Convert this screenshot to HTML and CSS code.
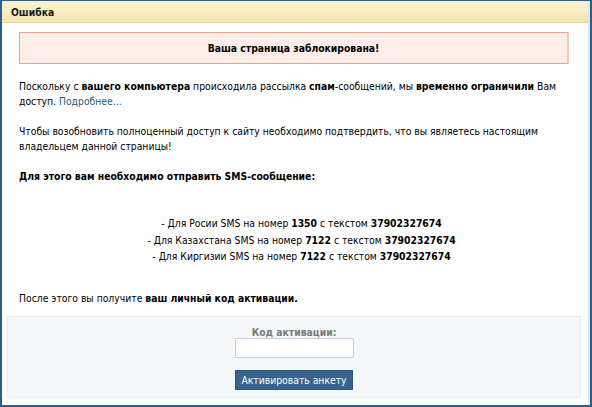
FILE: index.html
```html
<!DOCTYPE html>
<html lang="ru">
<head>
<meta charset="utf-8">
<title>Ошибка</title>
<link rel="stylesheet" href="styles.css">
</head>
<body>
<div class="window">
  <div class="frame">
    <div class="header">Ошибка</div>
    <div class="content">
      <div class="alert">Ваша страница заблокирована!</div>
      <p class="para">Поскольку с <b>вашего компьютера</b> происходила рассылка <b>спам</b>-сообщений, мы <b>временно ограничили</b> Вам доступ. <a class="link" href="#">Подробнее...</a></p>
      <p class="para">Чтобы возобновить полноценный доступ к сайту необходимо подтвердить, что вы являетесь настоящим владельцем данной страницы!</p>
      <p class="para heading"><b>Для этого вам необходимо отправить SMS-сообщение:</b></p>
      <ul class="list">
        <li>- Для Росии SMS на номер <b>1350</b> с текстом <b>37902327674</b></li>
        <li>- Для Казахстана SMS на номер <b>7122</b> с текстом <b>37902327674</b></li>
        <li>- Для Киргизии SMS на номер <b>7122</b> с текстом <b>37902327674</b></li>
      </ul>
      <p class="para after">После этого вы получите <b>ваш личный код активации.</b></p>
    </div>
    <div class="activation">
      <div class="label">Код активации:</div>
      <input class="code" type="text">
      <button class="btn" type="button">Активировать анкету</button>
    </div>
  </div>
</div>
</body>
</html>
```
FILE: styles.css
```css
html, body {
  margin: 0;
  padding: 0;
  background: #ffffff;
}
.window {
  width: 592px;
  height: 407px;
  box-sizing: border-box;
  border: 2px solid #2d5d8b;
  border-top-width: 1px;
  background: #ffffff;
  font-family: "DejaVu Sans Condensed", "DejaVu Sans", sans-serif;
  font-size: 10.3px;
  color: #000000;
}
.frame {
  height: 100%;
  box-sizing: border-box;
  border-right: 2px solid #dfe5ee;
  display: flex;
  flex-direction: column;
}
.header {
  height: 20px;
  line-height: 20px;
  padding-left: 9px;
  font-weight: bold;
  background: linear-gradient(#fbf4d2, #f2e6b0);
  border-top: 1px solid #f6efce;
  border-bottom: 1px solid #e2d6a2;
  color: #1a1a1a;
}
.content {
  padding: 0 4px 0 17px;
}
.alert {
  margin: 9px 15px 0 0;
  height: 30px;
  line-height: 30px;
  text-align: center;
  font-weight: bold;
  background: #ffefe8;
  border: 1px solid #f0a590;
  border-right-color: #e6d2b8;
  border-right-width: 2px;
}
.para {
  margin: 0;
  line-height: 15px;
}
.alert + .para {
  margin-top: 15px;
}
.para + .para {
  margin-top: 15px;
}
.heading {
  margin-top: 16px;
}
.link {
  color: #2b587a;
  text-decoration: none;
}
.list {
  list-style: none;
  margin: 31px 0 0;
  padding: 0;
  text-align: center;
  line-height: 16.5px;
}
.after {
  margin-top: 26px;
}
.activation {
  margin: 10px 7px 0 5px;
  height: 82px;
  box-sizing: border-box;
  background: #f6f7f9;
  border: 1px dotted #dfe3ea;
  display: flex;
  flex-direction: column;
  align-items: center;
  padding-top: 9px;
}
.label {
  font-weight: bold;
  color: #7a7a7a;
  line-height: 12px;
}
.code {
  margin: 0;
  width: 119px;
  height: 20px;
  box-sizing: border-box;
  border: 1px solid #c4cdd8;
  background: #ffffff;
  padding: 0;
}
.btn {
  margin-top: 12px;
  width: 118px;
  height: 20px;
  padding: 0;
  background: #36628e;
  border: 1px solid #2d557c;
  color: #ffffff;
  font-family: "DejaVu Sans Condensed", "DejaVu Sans", sans-serif;
  font-size: 10.3px;
}
```
